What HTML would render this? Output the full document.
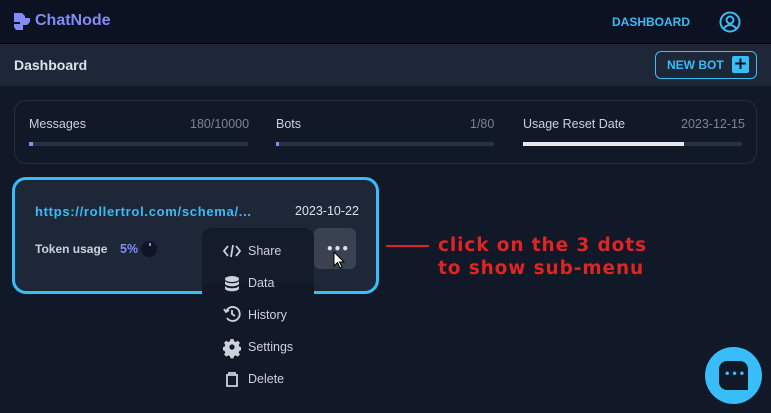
<!DOCTYPE html>
<html><head><style>
body{margin:0;width:771px;height:413px;overflow:hidden;background:#111827;font-family:"Liberation Sans",sans-serif;position:relative}
.a{position:absolute}
.t{font-family:"Liberation Sans",sans-serif}
</style></head><body>
<div class="a" style="left:0;top:0;width:771px;height:43px;background:#0c1221;border-bottom:1px solid #000"></div>
<svg class="a" style="left:14px;top:13px" width="18" height="17" viewBox="0 0 18 17"><path d="M0 0h8l3 3v2h5v4l-3 3H9v5H2l-2-3v-3h6V9H0z" fill="#818cf8"/></svg>
<div class="a t" style="left:35px;top:12px;font-size:16px;font-weight:bold;color:#818cf8">ChatNode</div>
<div class="a t" style="left:612px;top:15px;font-size:12px;font-weight:bold;color:#38bdf8">DASHBOARD</div>
<svg class="a" style="left:719px;top:11px" width="22" height="22" viewBox="0 0 22 22" fill="none" stroke="#38bdf8" stroke-width="2"><circle cx="11" cy="11" r="9.5"/><circle cx="11" cy="9" r="3.5"/><path d="M4.5 18c2-3 4-4 6.5-4s4.5 1 6.5 4"/></svg>
<div class="a" style="left:0;top:44px;width:771px;height:42px;background:#1e2738"></div>
<div class="a t" style="left:14px;top:57px;font-size:14px;font-weight:bold;color:#dde2ea">Dashboard</div>
<div class="a" style="left:655px;top:51px;width:102px;height:28px;border:1px solid #38bdf8;border-radius:6px;box-sizing:border-box"></div>
<div class="a t" style="left:667px;top:58px;font-size:12px;font-weight:bold;color:#38bdf8">NEW BOT</div>
<div class="a" style="left:732px;top:56px;width:17px;height:17px;background:#38bdf8;border-radius:2px;color:#0c1221;font:bold 17px/17px 'DejaVu Sans';text-align:center">+</div>
<div class="a" style="left:14px;top:100px;width:743px;height:64px;border:1px solid #242e3f;border-radius:12px;box-sizing:border-box"></div>
<div class="a t" style="left:29px;top:117px;font-size:12.5px;color:#cbd2dc">Messages</div>
<div class="a t" style="left:190px;top:117px;font-size:12.5px;color:#7b8494">180/10000</div>
<div class="a" style="left:29px;top:142px;width:219px;height:4px;background:#253041"><div style="width:4px;height:4px;background:#818cf8"></div></div>
<div class="a t" style="left:276px;top:117px;font-size:12.5px;color:#cbd2dc">Bots</div>
<div class="a t" style="left:470px;top:117px;font-size:12.5px;color:#7b8494">1/80</div>
<div class="a" style="left:276px;top:142px;width:218px;height:4px;background:#253041"><div style="width:3px;height:4px;background:#818cf8"></div></div>
<div class="a t" style="left:523px;top:117px;font-size:12.5px;color:#cbd2dc">Usage Reset Date</div>
<div class="a t" style="left:681px;top:117px;font-size:12.5px;color:#7b8494">2023-12-15</div>
<div class="a" style="left:523px;top:142px;width:219px;height:4px;background:#253041"><div style="width:161px;height:4px;background:#e5e7eb"></div></div>
<div class="a" style="left:12px;top:177px;width:367px;height:117px;border:3px solid #38bdf8;border-radius:14px;background:#1e2738;box-sizing:border-box"></div>
<div class="a t" style="left:35px;top:204px;font-size:13px;font-weight:bold;color:#38bdf8;letter-spacing:0.7px">https://rollertrol.com/schema/...</div>
<div class="a t" style="left:295px;top:204px;font-size:12.5px;color:#dde2ea">2023-10-22</div>
<div class="a t" style="left:35px;top:242px;font-size:12px;font-weight:bold;color:#cbd2dc">Token usage</div>
<div class="a t" style="left:120px;top:242px;font-size:12.5px;font-weight:bold;color:#818cf8">5%</div>
<div class="a" style="left:141px;top:241px;width:16px;height:16px;border-radius:50%;background:#0f1524"></div>
<div class="a" style="left:149px;top:243px;width:2px;height:3px;background:#818cf8"></div>
<div class="a" style="left:314px;top:228px;width:42px;height:41px;background:#3a4252;border-radius:6px"></div>
<div class="a" style="left:326px;top:247px;font:bold 12px/4px 'DejaVu Sans';color:#dde2ea">•••</div>
<svg class="a" style="left:333px;top:251px" width="12" height="18" viewBox="0 0 12 18"><path d="M1 1v14l3.5-3.5 2.5 5.5 2-1-2.5-5H11z" fill="#fff" stroke="#000"/></svg>
<div class="a" style="left:202px;top:228px;width:112px;height:170px;background:#111827;border-radius:10px"></div>
<div class="a" style="left:202px;top:228px;width:112px;height:55px;background:#141c2c;border-radius:10px 10px 0 0"></div>
<svg class="a" style="left:223px;top:243px" width="18" height="150" viewBox="0 0 18 150" fill="none" stroke="#cbd2dc" stroke-width="1.8">
<path d="M5 3L1 8l4 5M13 3l4 5-4 5M10 2L8 14"/>
<g fill="#cbd2dc" stroke="none"><ellipse cx="9" cy="36" rx="7" ry="3"/><path d="M2 38c2 3 12 3 14 0v3c-2 3-12 3-14 0zM2 43c2 3 12 3 14 0v3c-2 3-12 3-14 0z"/></g>
<path d="M3 69a7 7 0 1 1 1 6M1 66l2 3 3-2M9 67v4l3 2"/>
<g transform="translate(9,104)" fill="#cbd2dc" stroke="none"><path d="M-1.5-8h3l.5 2.2 1.8.8 2-1.2 2.1 2.1-1.2 2 .8 1.8 2.2.5v3l-2.2.5-.8 1.8 1.2 2-2.1 2.1-2-1.2-1.8.8-.5 2.2h-3l-.5-2.2-1.8-.8-2 1.2-2.1-2.1 1.2-2-.8-1.8-2.2-.5v-3l2.2-.5.8-1.8-1.2-2 2.1-2.1 2 1.2 1.8-.8z"/><circle r="2.6" fill="#111827"/></g>
<path d="M3 132h12M6 132v-2h6v2M4 132v11h10v-11"/>
</svg>
<div class="a t" style="left:248px;top:235px;font-size:12.5px;color:#cbd2dc;line-height:32px">Share<br>Data<br>History<br>Settings<br>Delete</div>
<div class="a" style="left:386px;top:245px;width:43px;height:2px;background:#e02424"></div>
<div class="a" style="left:438px;top:234px;font-family:'DejaVu Sans',sans-serif;font-size:18.5px;font-weight:bold;color:#e02424;line-height:23px;letter-spacing:0.9px">click on the 3 dots<br>to show sub-menu</div>
<div class="a" style="left:705px;top:347px;width:57px;height:57px;border-radius:50%;background:#38bdf8"></div>
<div class="a" style="left:719px;top:361px;width:29px;height:29px;border-radius:8px 8px 0 8px;background:#111827"></div>
<div class="a" style="left:724px;top:373px;font:bold 10px/4px 'DejaVu Sans';color:#38bdf8;letter-spacing:1px">•••</div>
</body></html>
